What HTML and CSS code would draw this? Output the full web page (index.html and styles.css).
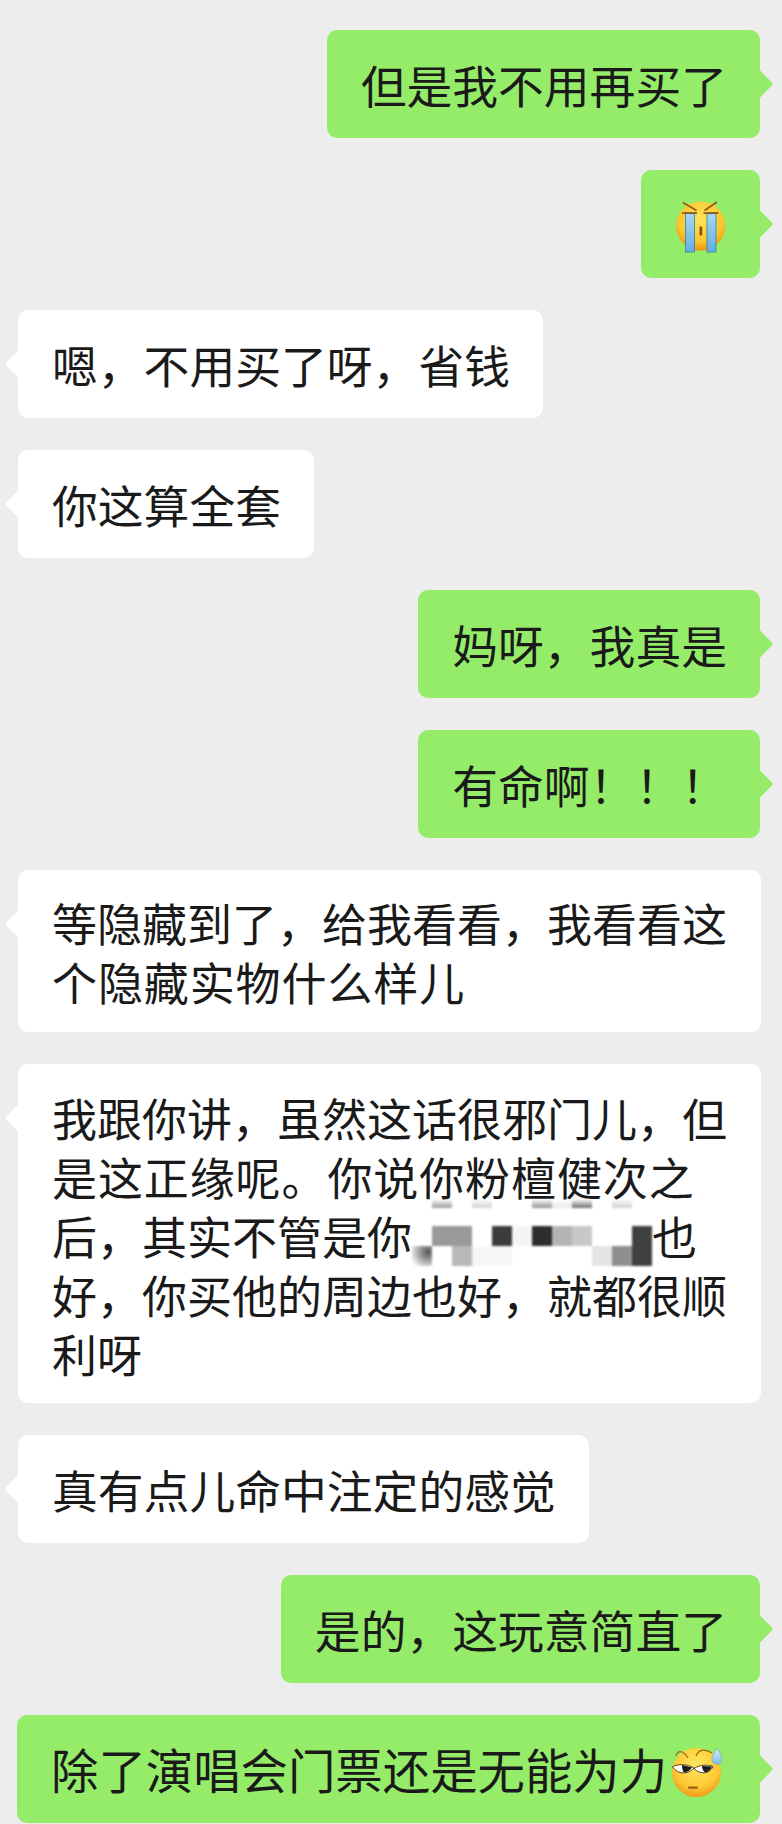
FILE: index.html
```html
<!DOCTYPE html>
<html lang="zh-CN">
<head>
    <meta charset="UTF-8">
    <meta name="viewport" content="width=device-width, initial-scale=1.0">
    <title>聊天记录</title>
    <link rel="stylesheet" href="styles.css">
</head>
<body>
    <div class="chat">
        <div class="bubble me">但是我不用再买了</div>
        <div class="bubble me emoji-only">
            <svg class="emoji cry" viewBox="0 0 50 53">
                <defs>
                    <radialGradient id="faceCry" cx="50%" cy="35%" r="65%">
                        <stop offset="0%" stop-color="#ffe45c"/>
                        <stop offset="70%" stop-color="#fdc62f"/>
                        <stop offset="100%" stop-color="#ee9414"/>
                    </radialGradient>
                    <linearGradient id="tear" x1="0" y1="0" x2="0" y2="1">
                        <stop offset="0%" stop-color="#a6d8f5"/>
                        <stop offset="100%" stop-color="#62aee3"/>
                    </linearGradient>
                </defs>
                <circle cx="24.700" cy="26" r="24.500" fill="url(#faceCry)"/>
                <rect x="9.500" y="13.500" width="9" height="38.500" fill="url(#tear)" stroke="#2f8296" stroke-width="0.800"/>
                <rect x="31" y="13.500" width="9" height="38.500" fill="url(#tear)" stroke="#2f8296" stroke-width="0.800"/>
                <path d="M6 13H21M27.500 13H42.500" stroke="#7a4a12" stroke-width="1.600"/>
                <path d="M7 2.500L20.500 10.500M41 2L28.500 10.500" stroke="#9a5a14" stroke-width="1.800"/>
                <rect x="23.500" y="26.500" width="2.700" height="9" rx="1" fill="#8a4f10"/>
            </svg>
        </div>
        <div class="bubble you">嗯，不用买了呀，省钱</div>
        <div class="bubble you">你这算全套</div>
        <div class="bubble me">妈呀，我真是</div>
        <div class="bubble me">有命啊！！！</div>
        <div class="bubble you full two-line">等隐藏到了，给我看看，我看看这<span class="loose">个隐藏实物什么样儿</span></div>
        <div class="bubble you full five-line">我跟你讲，虽然这话很邪门儿，但<span class="loose">是这正缘呢。你说你粉檀健次之</span>后，其实不管是你<span class="mosaic"><span class="mosaic-grid">
            <i class="c c-t1"></i><i class="c c-t2"></i><i class="c c-t3"></i><i class="c c-t4"></i><i class="c c-t5"></i><i class="c c-t6"></i>
            <i class="c c-a1"></i><i class="c c-a2"></i><i class="c c-a3"></i><i class="c c-a4"></i><i class="c c-a5"></i><i class="c c-a6"></i><i class="c c-a7"></i>
            <i class="c c-b1"></i><i class="c c-b2"></i><i class="c c-b3"></i><i class="c c-b4"></i><i class="c c-b5"></i><i class="c c-b6"></i>
        </span></span>也好，你买他的周边也好，就都很顺利呀</div>
        <div class="bubble you">真有点儿命中注定的感觉</div>
        <div class="bubble me">是的，这玩意简直了</div>
        <div class="bubble me last">除了演唱会门票还是无能为力<svg class="emoji inline" viewBox="0 0 50 50">
                <defs>
                    <radialGradient id="faceSweat" cx="50%" cy="35%" r="65%">
                        <stop offset="0%" stop-color="#ffe860"/>
                        <stop offset="70%" stop-color="#fdc934"/>
                        <stop offset="100%" stop-color="#ef9a18"/>
                    </radialGradient>
                    <linearGradient id="drop" x1="0" y1="0" x2="0" y2="1">
                        <stop offset="0%" stop-color="#d8eefb"/>
                        <stop offset="100%" stop-color="#7fbde6"/>
                    </linearGradient>
                </defs>
                <circle cx="24.500" cy="24.500" r="24.500" fill="url(#faceSweat)"/>
                <path d="M3.700 8C6 2 11 2 16 10" fill="none" stroke="#9a6512" stroke-width="1.200"/>
                <path d="M24 8C27 0.500 34 1 40 5" fill="none" stroke="#9a6512" stroke-width="1.200"/>
                <path d="M0.500 19C6 15.500 15 16 22 20C17 26.500 6 27 0.500 19Z" fill="#fff" stroke="#4a3410" stroke-width="0.900"/>
                <path d="M10 17L20 19.500C18 23 14 24.500 12 24.500C10.500 22.500 10 20 10 17Z" fill="#1c1c1c"/>
                <path d="M22 20.500C28 16.500 36 16.500 41 18.500C38 26 28 27 22 20.500Z" fill="#fff" stroke="#4a3410" stroke-width="0.900"/>
                <path d="M30 18L40 18.500C39 21.500 36 24 33 24.500C31 22.500 30 20.500 30 18Z" fill="#1c1c1c"/>
                <rect x="16" y="38.500" width="10" height="2.300" rx="1" fill="#9a5a14"/>
                <path d="M45 0C47.500 5 50 8 50 11.500A5 5 0 0 1 40 11.500C40 8 42.500 5 45 0Z" fill="url(#drop)" stroke="#6a9fbf" stroke-width="0.600"/>
            </svg></div>
    </div>
</body>
</html>
```

FILE: styles.css
```css
body {
    margin: 0;
    background-color: #ededed;
    font-family: "Noto Sans CJK SC", "Noto Sans", sans-serif;
    color: #1a1a1a;
}

.chat {
    display: flex;
    flex-direction: column;
    gap: 32px;
    padding: 30px 22px 1px 18px;
}

.bubble {
    position: relative;
    flex: none;
    box-sizing: border-box;
    width: fit-content;
    padding: 25px 33px 25px 34px;
    border-radius: 10px;
    font-size: 45.8px;
    line-height: 58px;
}

.bubble::after {
    content: "";
    position: absolute;
    top: 43px;
    width: 22px;
    height: 22px;
    border-radius: 3px;
    transform: rotate(45deg);
}

.me {
    align-self: flex-end;
    background-color: #95ec69;
}

.me::after {
    right: -9px;
    background-color: #95ec69;
}

.you {
    background-color: #fff;
}

.you::after {
    left: -9px;
    background-color: #fff;
}

.full {
    width: 743px;
    padding-right: 19px;
    font-size: 45px;
    line-height: 59px;
}

.two-line {
    padding-top: 23px;
    padding-bottom: 21px;
}

.five-line {
    padding-top: 24px;
    padding-bottom: 20px;
}

.loose {
    letter-spacing: 0.9px;
}

.last {
    width: 743px;
    padding-right: 0;
    font-size: 47.4px;
    white-space: nowrap;
}

.emoji-only {
    display: flex;
    align-items: center;
    justify-content: center;
    width: 119px;
    height: 108px;
    padding: 0;
}

.emoji {
    width: 50px;
    height: 50px;
    display: block;
}

.emoji.cry {
    height: 53px;
    margin-top: 4px;
}

.emoji.inline {
    display: inline-block;
    margin-left: 5px;
    vertical-align: -9px;
}

.mosaic {
    position: relative;
    display: inline-block;
    width: 240px;
    height: 40px;
    vertical-align: middle;
}

.mosaic-grid {
    position: absolute;
    left: 0;
    top: -24px;
    width: 240px;
    height: 67px;
    display: grid;
    grid-template-columns: repeat(12, 20px);
    grid-template-rows: 9px 18px 20px 20px;
    background: linear-gradient(to bottom, transparent 0, transparent 8px, #fff 14px);
    filter: blur(0.8px);
}

.c {
    display: block;
}

.c-t1 { grid-area: 1 / 2 / 2 / 3; background: linear-gradient(to top, #999, transparent); }
.c-t2 { grid-area: 1 / 4 / 2 / 5; background: linear-gradient(to top, #d2d2d2, transparent); }
.c-t3 { grid-area: 1 / 7 / 2 / 8; background: linear-gradient(to top, #8e8e8e, transparent); }
.c-t4 { grid-area: 1 / 8 / 2 / 9; background: linear-gradient(to top, #e8e8e8, transparent); }
.c-t5 { grid-area: 1 / 9 / 2 / 10; background: linear-gradient(to top, #6a6a6a, transparent); }
.c-t6 { grid-area: 1 / 11 / 2 / 12; background: linear-gradient(to top, #cfcfcf, transparent); }

.c-a1 { grid-area: 3 / 2 / 4 / 4; background: #999; }
.c-a2 { grid-area: 3 / 5 / 4 / 6; background: #3c3c3c; }
.c-a3 { grid-area: 3 / 6 / 4 / 7; background: #f5f5f5; }
.c-a4 { grid-area: 3 / 7 / 4 / 8; background: #2e2e2e; }
.c-a5 { grid-area: 3 / 8 / 4 / 9; background: #b5b5b5; }
.c-a6 { grid-area: 3 / 9 / 4 / 10; background: #c8c8c8; }
.c-a7 { grid-area: 3 / 12 / 4 / 13; background: #404040; }

.c-b1 { grid-area: 4 / 1 / 5 / 2; background: radial-gradient(circle at 80% 30%, #555, #fff 90%); }
.c-b2 { grid-area: 4 / 3 / 5 / 4; background: #b8b8b8; }
.c-b3 { grid-area: 4 / 4 / 5 / 6; background: #f6f6f6; }
.c-b4 { grid-area: 4 / 10 / 5 / 11; background: #e4e4e4; }
.c-b5 { grid-area: 4 / 11 / 5 / 12; background: #8f8f8f; }
.c-b6 { grid-area: 4 / 12 / 5 / 13; background: #404040; }
```
